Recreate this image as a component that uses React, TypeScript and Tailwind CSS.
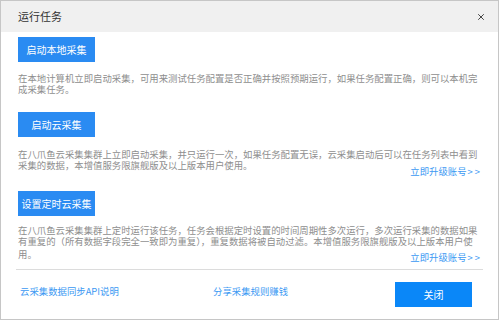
import { X } from "lucide-react";

const font = { fontFamily: '"Noto Sans CJK SC", "Noto Sans", sans-serif' };

function Lines({ lines, last }: { lines: string[]; last?: string }) {
  return (
    <div className="text-[9.4px] leading-[11px] text-[#8e8e8e]">
      {lines.map((l) => (
        <div key={l} className="whitespace-nowrap">
          {l}
        </div>
      ))}
      {last && <div className="mt-[1.5px] whitespace-nowrap">{last}</div>}
    </div>
  );
}

function Upgrade({ className }: { className: string }) {
  return (
    <div className={`flex justify-end w-[464px] text-[9.4px] leading-[11px] text-[#3b99f3] ${className}`}>
      <span>
        立即升级账号<span className="tracking-[2px] ml-[1px]">&gt;&gt;</span>
      </span>
    </div>
  );
}

function TaskButton({ label }: { label: string }) {
  return (
    <button className="block w-[77px] h-[25px] bg-[#2a8bf2] text-white text-[10px] leading-[25px] text-center">
      {label}
    </button>
  );
}

export default function App() {
  return (
    <div className="w-[500px] h-[322px] bg-white" style={font}>
      <div className="w-[499px] h-[320px] border border-[#c6c6c6] flex flex-col">
        <div className="h-[31px] shrink-0 bg-[#f0f0f0] flex items-center justify-between pl-[17px] pr-[12px]">
          <span className="text-[11px] text-[#333]">运行任务</span>
          <X size={10} strokeWidth={2} className="text-[#222]" />
        </div>

        <div className="pl-[17px] pt-[5px] flex flex-col">
          <TaskButton label="启动本地采集" />
          <div className="mt-[11px]">
            <Lines
              lines={[
                "在本地计算机立即启动采集，可用来测试任务配置是否正确并按照预期运行，如果任务配置正确，则可以本机完",
                "成采集任务。",
              ]}
            />
          </div>

          <div className="mt-[17px]">
            <TaskButton label="启动云采集" />
          </div>
          <div className="mt-[12px]">
            <Lines
              lines={[
                "在八爪鱼云采集集群上立即启动采集，并只运行一次，如果任务配置无误，云采集启动后可以在任务列表中看到",
                "采集的数据，本增值服务限旗舰版及以上版本用户使用。",
              ]}
            />
          </div>
          <Upgrade className="-mt-[5px]" />

          <div className="mt-[14px]">
            <TaskButton label="设置定时云采集" />
          </div>
          <div className="mt-[9px]">
            <Lines
              lines={[
                "在八爪鱼云采集集群上定时运行该任务，任务会根据定时设置的时间周期性多次运行，多次运行采集的数据如果",
                "有重复的（所有数据字段完全一致即为重复），重复数据将被自动过滤。本增值服务限旗舰版及以上版本用户使",
              ]}
              last="用。"
            />
          </div>
          <Upgrade className="-mt-[8px]" />
        </div>

        <div className="mt-[6px] ml-[15px] w-[467px] h-px bg-[#dcdcdc]" />

        <div className="flex items-start pl-[19px] mt-[12px]">
          <span className="mt-[4px] w-[193px] text-[9.4px] leading-[11px] text-[#3b99f3]">云采集数据同步API说明</span>
          <span className="mt-[4px] text-[9.4px] leading-[11px] text-[#3b99f3]">分享采集规则赚钱</span>
          <button className="ml-auto mr-[26px] w-[77px] h-[25px] bg-[#0a87f8] text-white text-[10px]">关闭</button>
        </div>
      </div>
    </div>
  );
}
